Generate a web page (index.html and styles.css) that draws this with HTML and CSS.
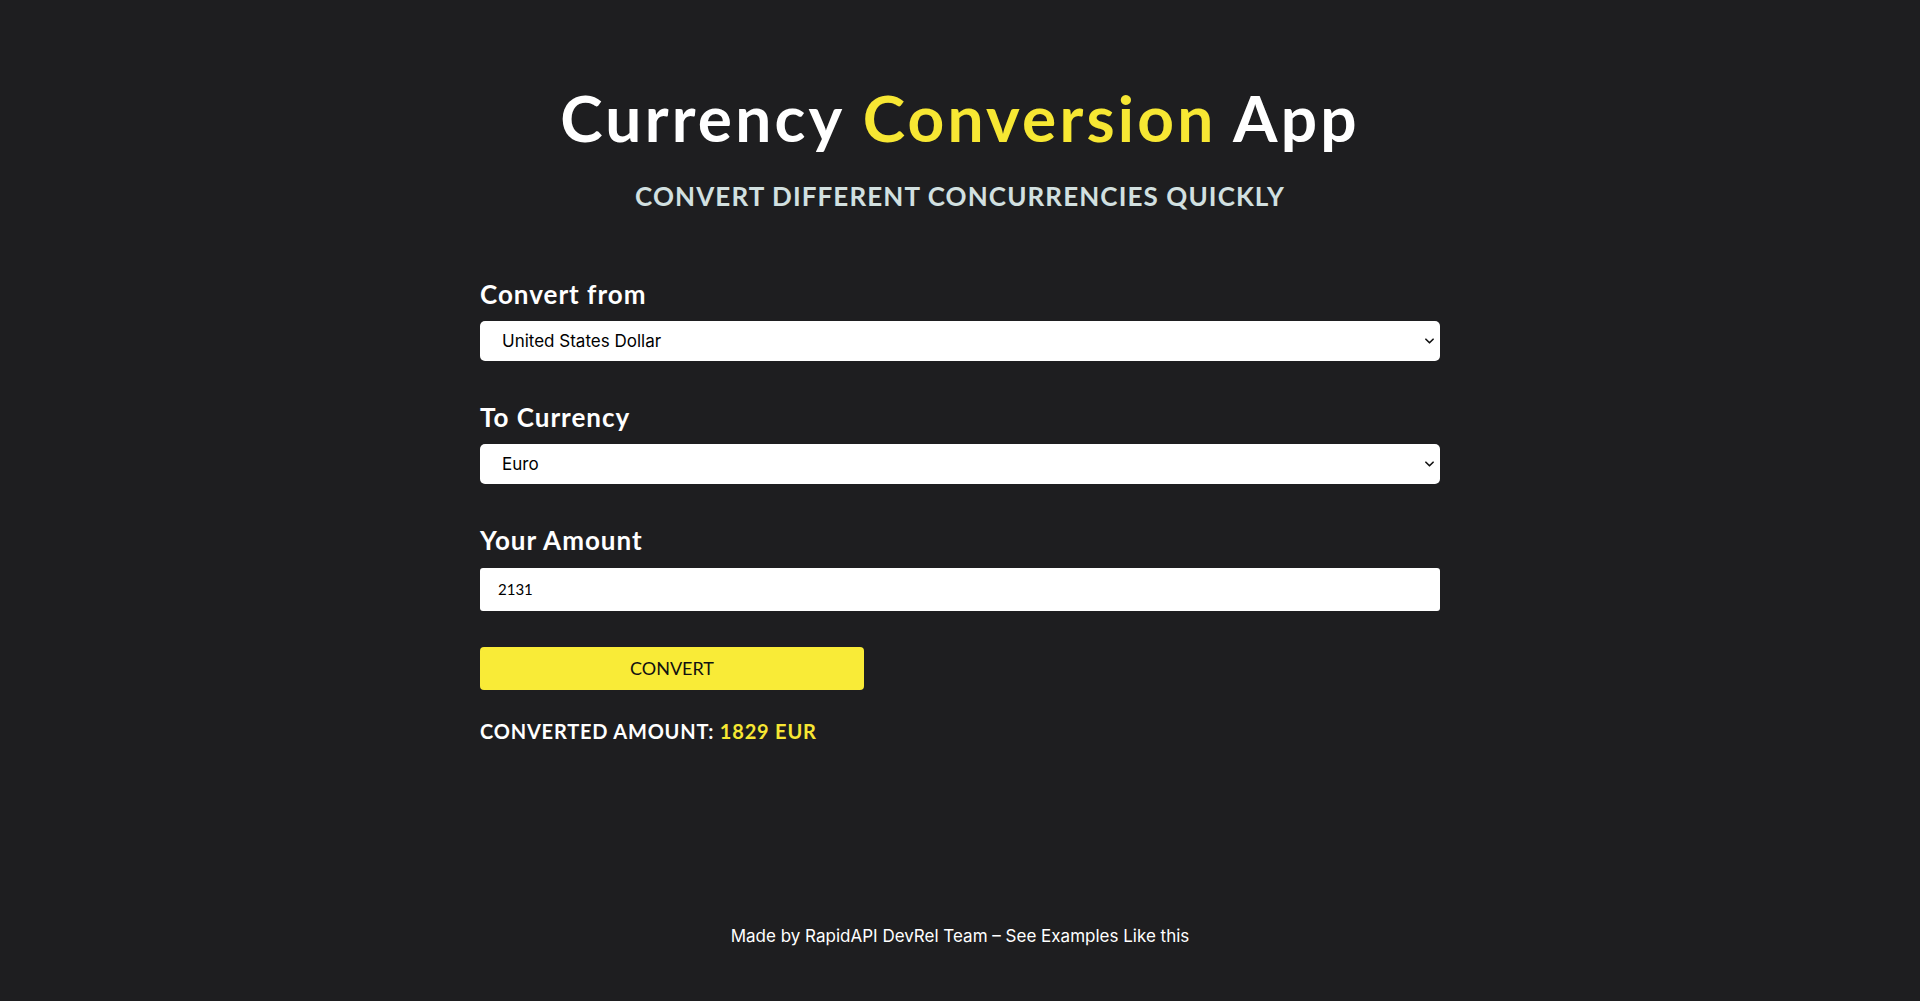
FILE: index.html
```html
<!DOCTYPE html>
<html lang="en">
<head>
<meta charset="utf-8">
<title>Currency Conversion App</title>
<link rel="stylesheet" href="styles.css">
</head>
<body>
<div class="page">
  <header class="hero">
    <h1 class="title">Currency <span class="accent">Conversion</span> App</h1>
    <h3 class="subtitle">CONVERT DIFFERENT CONCURRENCIES QUICKLY</h3>
  </header>
  <main class="form">
    <label class="label label-first" for="from">Convert from</label>
    <div class="select-wrap">
      <select id="from" class="select"><option>United States Dollar</option></select>
      <svg class="chevron" viewBox="0 0 10 6" width="9" height="6"><path d="M1 1 L5 5 L9 1" fill="none" stroke="#111" stroke-width="1.8" stroke-linecap="round" stroke-linejoin="round"/></svg>
    </div>
    <label class="label" for="to">To Currency</label>
    <div class="select-wrap">
      <select id="to" class="select"><option>Euro</option></select>
      <svg class="chevron" viewBox="0 0 10 6" width="9" height="6"><path d="M1 1 L5 5 L9 1" fill="none" stroke="#111" stroke-width="1.8" stroke-linecap="round" stroke-linejoin="round"/></svg>
    </div>
    <label class="label" for="amount">Your Amount</label>
    <input id="amount" class="input" type="text" value="2131">
    <button class="button" type="button">CONVERT</button>
    <p class="result">CONVERTED AMOUNT: <span class="accent">1829 EUR</span></p>
  </main>
  <footer class="footer">Made by RapidAPI DevRel Team – See Examples Like this</footer>
</div>
</body>
</html>
```
FILE: styles.css
```css
* { box-sizing: border-box; }
html, body { margin: 0; padding: 0; }
body {
  background: #1e1e20;
  color: #ffffff;
  font-family: "Lato", "Open Sans", sans-serif;
}
.page {
  min-height: 100vh;
  display: flex;
  flex-direction: column;
}
.hero {
  display: flex;
  flex-direction: column;
  align-items: center;
  padding-top: 80px;
}
.title {
  margin: 0;
  font-size: 64px;
  line-height: 1.2;
  font-weight: 700;
  letter-spacing: 3.2px;
  color: #ffffff;
}
.accent { color: #f7e733; }
.subtitle {
  margin: 24px 0 0;
  font-size: 26px;
  line-height: 1.2;
  font-weight: 700;
  color: #d2e0e0;
  letter-spacing: 1.1px;
}
.form {
  width: 960px;
  margin: 0 auto;
  display: flex;
  flex-direction: column;
  align-items: stretch;
}
.label {
  display: block;
  margin-top: 41px;
  font-size: 26px;
  line-height: 1.2;
  font-weight: 700;
  letter-spacing: 1px;
  color: #ffffff;
}
.label-first { margin-top: 67px; }
.select-wrap {
  position: relative;
  margin-top: 11px;
}
.select {
  display: block;
  width: 100%;
  height: 40px;
  -webkit-appearance: none;
  appearance: none;
  background: #ffffff;
  border: none;
  border-radius: 5px;
  padding: 0 40px 0 22px;
  font-family: "Inter", "Liberation Sans", sans-serif;
  font-size: 17px;
  color: #000000;
}
.chevron {
  position: absolute;
  right: 6px;
  top: 17px;
}
.input {
  display: block;
  width: 100%;
  height: 43px;
  margin-top: 11px;
  border: none;
  border-radius: 3px;
  background: #ffffff;
  padding: 0 18px;
  font-family: "Lato", sans-serif;
  font-size: 15px;
  color: #000000;
}
.button {
  width: 384px;
  height: 43px;
  margin-top: 36px;
  border: none;
  border-radius: 4px;
  background: #f9eb37;
  color: #111111;
  font-family: "Lato", sans-serif;
  font-size: 18px;
  font-weight: 400;
  cursor: pointer;
}
.result {
  margin: 29px 0 0;
  font-size: 20px;
  line-height: 1.2;
  font-weight: 700;
  letter-spacing: 0.8px;
  color: #ffffff;
}
.footer {
  margin-top: auto;
  padding-bottom: 55px;
  text-align: center;
  font-family: "Inter", "Liberation Sans", sans-serif;
  font-size: 17px;
  color: #ffffff;
}
```
